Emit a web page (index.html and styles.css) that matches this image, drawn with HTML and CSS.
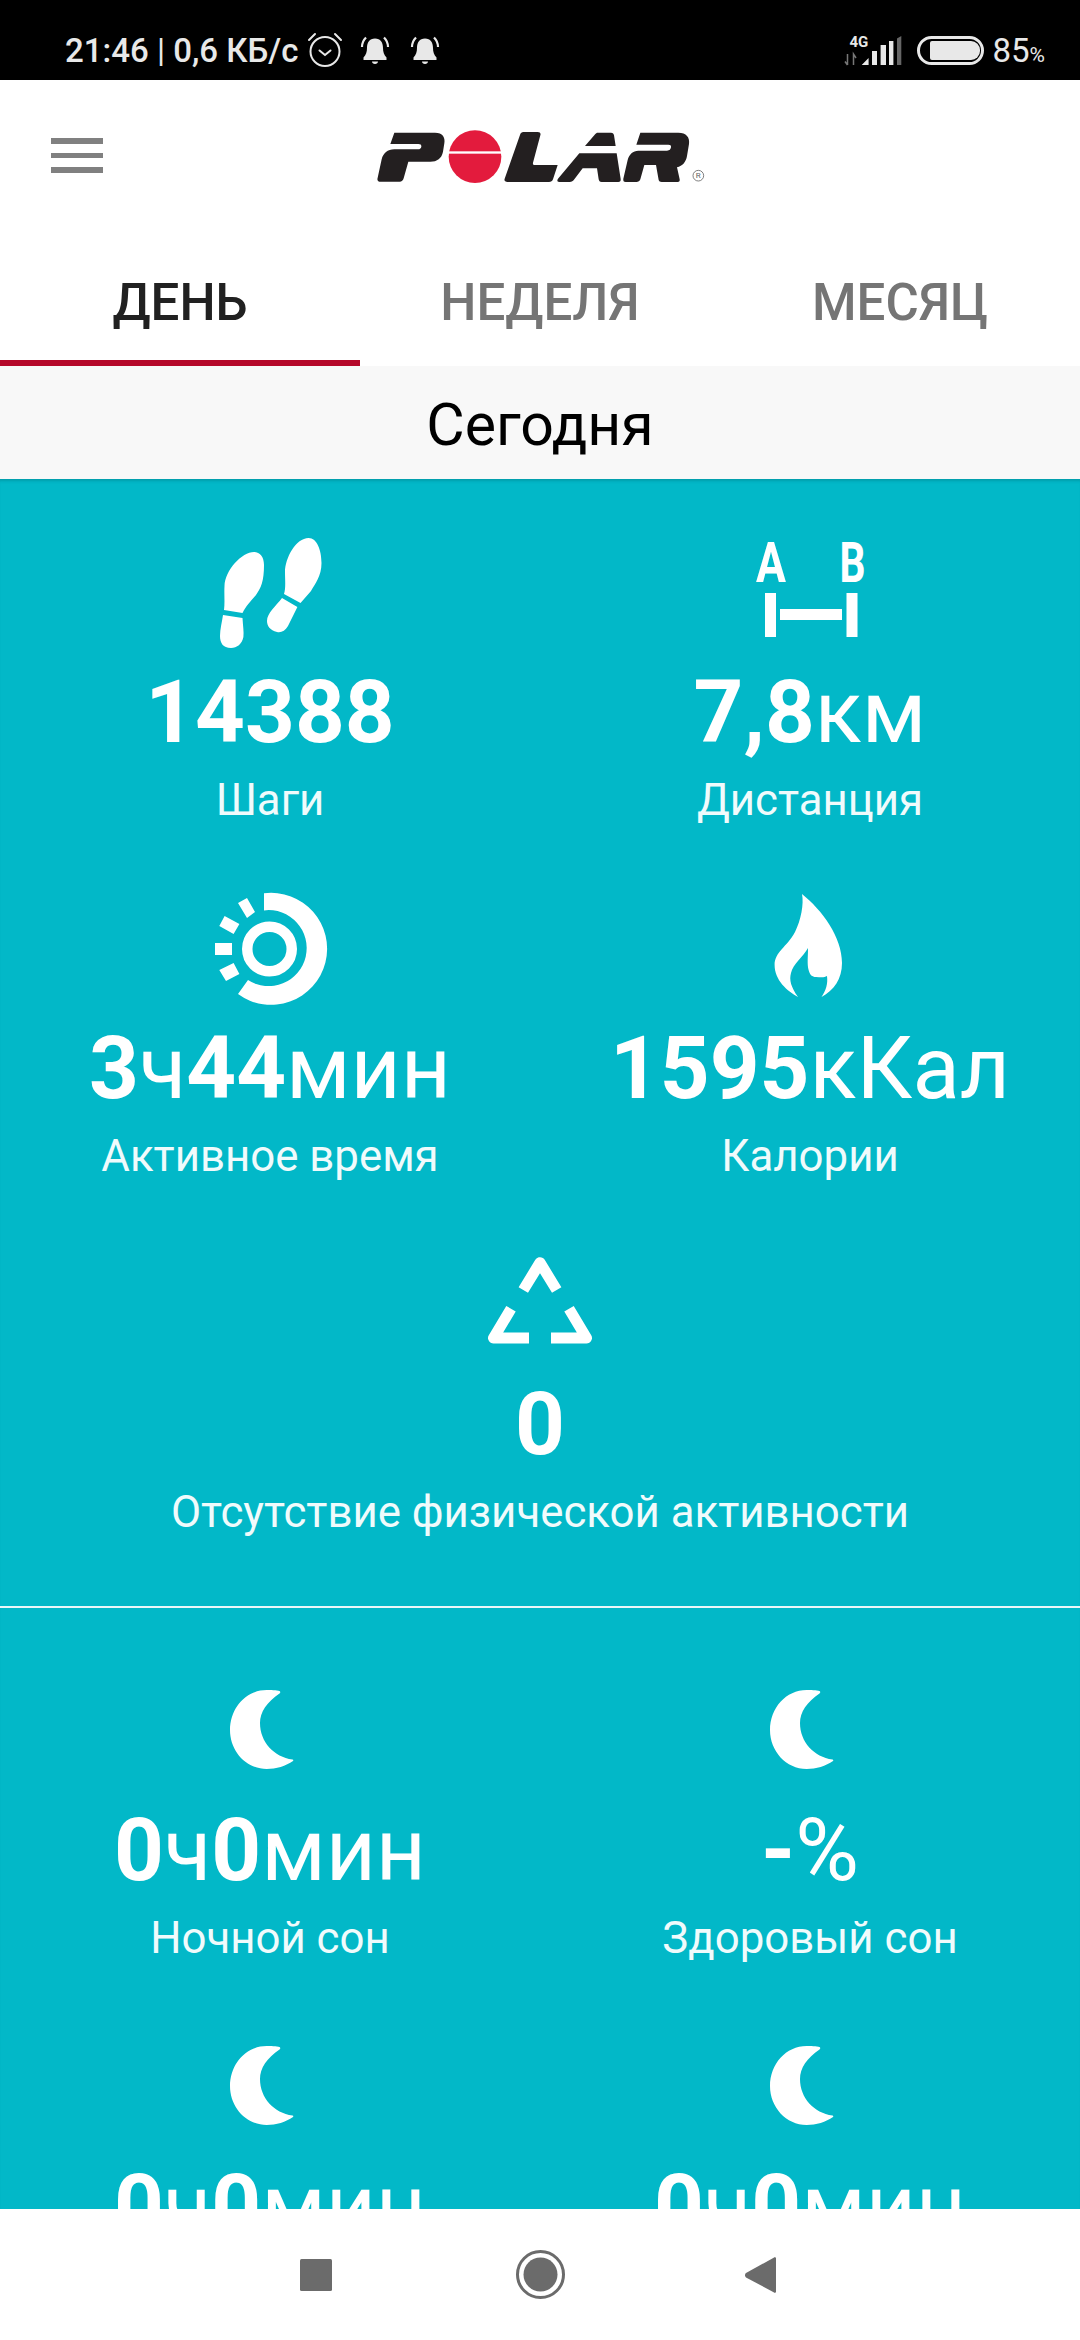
FILE: index.html
```html
<!DOCTYPE html>
<html lang="ru">
<head>
<meta charset="utf-8">
<title>Polar</title>
<link rel="stylesheet" href="styles.css">
</head>
<body>
<div class="phone">
  <div class="status">
    <div class="status-left">
      <span>21:46 <span class="thin">|</span> 0,6 КБ/с</span>
      <svg class="ic-alarm" viewBox="0 0 36 36"><g fill="none" stroke="#e8e8e8" stroke-width="2"><circle cx="18" cy="19.500" r="14.500"/><path d="M12.500 18.500l5.500 4.500 5.500-4.500M2 8l6-6M34 8l-6-6" stroke-linecap="round"/></g></svg>
      <svg class="ic-bell" viewBox="0 0 32 32"><use href="#bell"/></svg>
      <svg class="ic-bell second" viewBox="0 0 32 32"><use href="#bell"/></svg>
    </div>
    <div class="status-right">
      <svg class="ic-signal" viewBox="0 0 57 32">
        <text x="5.500" y="12.500" class="t4g">4G</text>
        <path d="M3.500 20v11M1 27.500l2.500 3.500M9.500 31V20l2.500 4" stroke="#777" stroke-width="1.500" fill="none"/>
        <path d="M17.700 31l6.900-7v7zM28 17h5v14h-5zM36.600 11h5.400v20h-5.400zM45 7h4.400v24H45z" fill="#e8e8e8"/>
        <path d="M53 4.500l4.300-2.500v29H53z" fill="#666"/>
      </svg>
      <div class="battery"><div class="battery-fill"></div></div>
      <span class="pct">85<small>%</small></span>
    </div>
  </div>

  <svg class="defs" width="0" height="0"><defs>
    <g id="bell" fill="#e8e8e8"><path d="M16 4.500c-5.500 0-8 4-8 9.500 0 4-1 7-3.500 9.500V26h23v-2.500C25 21 24 18 24 14c0-5.500-2.500-9.500-8-9.500zM13 27.500h6c0 1.500-1.300 2.500-3 2.500s-3-1-3-2.500z"/><path d="M3 13c0-4 1.500-7 4-9.500M29 13c0-4-1.500-7-4-9.500" fill="none" stroke="#e8e8e8" stroke-width="2.200"/></g>
    <path id="moon" d="M52.700 16C56 16 63 16 65.500 17c1 .7 1 1.500 0 2.500C53 28 46 38 46 49c0 19 14 34 32.500 36.500 1 .3 1 1 .5 1.500-7 5-17 8-26.300 8C32 95 16 77 16 56 16 34 32 16 52.700 16z" fill="#fff"/>
  </defs></svg>

  <header class="appbar">
    <div class="burger"><i></i><i></i><i></i></div>
    <svg class="logo" viewBox="0 0 1050 210" role="img" aria-label="Polar">
      <g fill="#231f20">
        <path d="M100 38H222c23 0 31 14 28 32l-4 25c-4 20-18 30-38 30H142l-14 50c-2 7-6 10-12 10H58c-8 0-10-6-8-12l12-55c4-18 18-30 38-30h70c8 0 10-4 11-8 1-6-3-8-9-8H88z"/>
        <path d="M478 42c2-4 6-6 12-6h40c7 0 10 4 8 10l-22 82c-1 5 1 7 6 7h68l-14 43c-2 6-6 8-12 8H440c-8 0-11-4-9-10z"/>
        <path d="M708 38h42c6 0 8 3 9 8l5 32h-92l31-36zM655 100h112l12 77c1 6-2 9-7 9h-50c-6 0-8-3-9-8l-5-33h-43l-25 33c-4 6-8 8-14 8h-30c-7 0-9-4-5-10z"/>
        <path d="M838 38h114c24 0 35 14 32 34l-6 36c-3 18-13 30-30 34l8 36c1 5-1 8-6 8h-48c-5 0-8-2-9-6l-8-45h-35l-12 43c-2 6-6 8-12 8h-32c-6 0-8-4-7-10l13-56c4-17 16-28 32-28h86c8 0 11-4 12-10 1-6-2-8-8-8h-96z"/>
      </g>
      <circle cx="342" cy="110" r="79" fill="#e31b3d"/>
      <rect x="255" y="94" width="175" height="7" fill="#fff"/>
      <circle cx="1012" cy="167" r="16" fill="none" stroke="#666" stroke-width="2.500"/>
      <text x="1012" y="175" class="reg">R</text>
    </svg>
  </header>

  <nav class="tabs">
    <div class="tab active">ДЕНЬ</div>
    <div class="tab">НЕДЕЛЯ</div>
    <div class="tab">МЕСЯЦ</div>
  </nav>

  <div class="dayband">Сегодня</div>

  <main class="content">
    <section class="grid activity">
      <div class="cell">
        <svg class="icon" viewBox="0 0 112 112" fill="#fff">
          <path d="M40 16c6 0 10 5 10 13 0 16-3 23-8 30-6 7-10 11-13.500 18L10 74c1-8 0-16 .5-24C11 34 28 16 40 16z"/>
          <path d="M9 79l19.500 3c.5 8 1.500 14 .9 19-1.400 7-6.400 11-12.400 11-8 0-11-5-11-12 0-7 2-14 3-21z"/>
          <path d="M94.600 2c8.400 0 12.900 12 12.900 25 0 13-6.500 21-10.500 28L86.500 67 70 58c2-6 1-14 1-22C71 22 82 2 94.600 2z"/>
          <path d="M68 62l15.400 9L74 90c-3 5-7 7-11 6-7-2-10-6-10-11 0-8 9-15 15-23z"/>
        </svg>
        <div class="value"><b>14388</b></div>
        <div class="label">Шаги</div>
      </div>
      <div class="cell">
        <svg class="icon" viewBox="0 0 112 112" fill="#fff">
          <text x="2" y="46" class="ab" textLength="30" lengthAdjust="spacingAndGlyphs">A</text>
          <text x="85.500" y="46" class="ab" textLength="26" lengthAdjust="spacingAndGlyphs">B</text>
          <rect x="11" y="57" width="11" height="44"/><rect x="92.500" y="57" width="11" height="44"/><rect x="26" y="73" width="62" height="11"/>
        </svg>
        <div class="value"><b>7,8</b>км</div>
        <div class="label">Дистанция</div>
      </div>
      <div class="cell">
        <svg class="icon" viewBox="0 0 112 112" fill="#fff">
          <path d="M50 1.300A56 56 0 1 1 24 102L34 88A38 38 0 1 0 50 18.400z"/>
          <circle cx="55.500" cy="57" r="22.250" fill="none" stroke="#fff" stroke-width="10.500"/>
          <path d="M33 6l8 14-8 6-9-15zM10.600 24l14.800 8-5.800 10-14.300-8zM1 51h17v12H1zM19.600 71l5.800 11L12 89 5.300 78z"/>
        </svg>
        <div class="value"><b>3</b>ч<b>44</b>мин</div>
        <div class="label">Активное время</div>
      </div>
      <div class="cell">
        <svg class="icon" viewBox="0 0 112 112" fill="#fff">
          <path d="M48 2c2 10-1 26-7 38C33 55 20.600 60 20.600 73 20.600 88 33 99 44 105c-7-10-9-17-7-24 2-9 12-16 17-25 0 9-1 16 .6 22 1.400 5 3.400 7 7.400 7 4 0 8 1 11-1 1 8-1 14-5.500 21C80 98 88 87 88 71 88 45 68 18 48 2z"/>
        </svg>
        <div class="value"><b>1595</b>кКал</div>
        <div class="label">Калории</div>
      </div>
      <div class="cell wide">
        <svg class="icon" viewBox="0 0 112 112" fill="none" stroke="#fff" stroke-width="11" stroke-linejoin="round">
          <path d="M39.300 42L56 14.700 72.700 42M27 60.700L9.500 90H45M85 60.700L102.500 90H67"/>
        </svg>
        <div class="value"><b>0</b></div>
        <div class="label">Отсутствие физической активности</div>
      </div>
    </section>
    <hr class="rule">
    <section class="grid sleep">
      <div class="cell">
        <svg class="icon" viewBox="0 0 112 112"><use href="#moon"/></svg>
        <div class="value"><b>0</b>ч<b>0</b>мин</div>
        <div class="label">Ночной сон</div>
      </div>
      <div class="cell">
        <svg class="icon" viewBox="0 0 112 112"><use href="#moon"/></svg>
        <div class="value"><b>-</b>%</div>
        <div class="label">Здоровый сон</div>
      </div>
      <div class="cell">
        <svg class="icon" viewBox="0 0 112 112"><use href="#moon"/></svg>
        <div class="value"><b>0</b>ч<b>0</b>мин</div>
      </div>
      <div class="cell">
        <svg class="icon" viewBox="0 0 112 112"><use href="#moon"/></svg>
        <div class="value"><b>0</b>ч<b>0</b>мин</div>
      </div>
    </section>
  </main>

  <footer class="navbar">
    <svg class="nav-square" viewBox="0 0 32 32"><rect width="32" height="32" rx="1.500" fill="#6b6b6b"/></svg>
    <svg class="nav-home" viewBox="0 0 49 49"><circle cx="24.500" cy="24.500" r="23" fill="none" stroke="#6b6b6b" stroke-width="3"/><circle cx="24.500" cy="24.500" r="17" fill="#6b6b6b"/></svg>
    <svg class="nav-back" viewBox="0 0 31 36"><path d="M31 1v34l-1 1L1 20.500a3 3 0 0 1 0-4.500L30 0z" fill="#6b6b6b"/></svg>
  </footer>
</div>
</body>
</html>
```
FILE: styles.css
```css
* { box-sizing: border-box; }
html, body { margin: 0; padding: 0; }
body { width: 1080px; height: 2340px; overflow: hidden; background: #fff; font-family: Roboto, "Noto Sans", sans-serif; }
.phone { width: 1080px; height: 2340px; display: flex; flex-direction: column; overflow: hidden; }
.defs { position: absolute; }

.status { flex: 0 0 80px; background: #000; color: #e8e8e8; display: flex; justify-content: space-between; align-items: center; padding: 20px 35px 0 65px; font-size: 33px; font-weight: 500; }
.status-left { display: flex; align-items: center; }
.thin { font-weight: 400; }
.ic-alarm { width: 36px; height: 36px; margin-left: 9px; }
.ic-bell { width: 32px; height: 32px; margin-left: 16px; }
.ic-bell.second { margin-left: 18px; }
.status-right { display: flex; align-items: center; }
.ic-signal { width: 57px; height: 32px; overflow: visible; }
.t4g { font-size: 15px; font-weight: 700; fill: #e8e8e8; }
.battery { width: 67px; height: 29px; border: 3px solid #e8e8e8; border-radius: 15px; padding: 2px 0 2px 10px; margin-left: 16px; }
.battery-fill { width: 50px; height: 19px; background: #e8e8e8; border-radius: 2px 9px 9px 2px; }
.pct { font-size: 33px; font-weight: 400; margin-left: 9px; }
.pct small { font-size: 21px; }

.appbar { flex: 0 0 165px; position: relative; display: flex; justify-content: center; align-items: flex-start; padding-top: 40px; }
.burger { position: absolute; left: 51px; top: 58px; width: 52px; display: flex; flex-direction: column; gap: 9px; }
.burger i { display: block; height: 5.500px; background: #808080; }
.logo { width: 350px; height: 70px; margin-left: -8px; }
.reg { font-size: 24px; fill: #666; text-anchor: middle; }

.tabs { flex: 0 0 121px; display: grid; grid-template-columns: repeat(3, 1fr); }
.tab { display: flex; align-items: center; justify-content: center; font-size: 51px; font-weight: 500; color: #757575; border-bottom: 6px solid transparent; }
.tab.active { color: #212121; border-bottom-color: #b5082a; }

.dayband { flex: 0 0 113px; background: #f8f8f8; display: flex; align-items: center; justify-content: center; padding-top: 3px; font-size: 59px; color: #000; }

.content { flex: 1 1 0; min-height: 0; overflow: hidden; background: #02b8c8; color: #fff; padding-top: 57px; box-shadow: inset 0 4px 3px -2px rgba(0, 60, 70, .22); }
.grid { display: grid; grid-template-columns: 1fr 1fr; row-gap: 67px; }
.activity { padding-bottom: 69px; }
.sleep { padding-top: 66px; }
.cell { display: flex; flex-direction: column; align-items: center; }
.wide { grid-column: 1 / -1; }
.icon { display: block; width: 112px; height: 112px; overflow: visible; }
.value { font-size: 87px; line-height: 100px; margin-top: 14px; white-space: nowrap; }
.value b { font-weight: 700; }
.label { font-size: 43.800px; line-height: 50px; margin-top: 13px; color: #f0fbfc; }
.ab { font-size: 55px; font-weight: 700; fill: #fff; }
.rule { margin: 0; height: 2px; border: 0; background: #e9f7f9; }

.navbar { flex: 0 0 131px; background: #fff; display: flex; align-items: center; padding-left: 300px; }
.nav-square { width: 32px; height: 32px; }
.nav-home { width: 49px; height: 49px; margin-left: 184px; }
.nav-back { width: 31px; height: 36px; margin-left: 180px; }
```
